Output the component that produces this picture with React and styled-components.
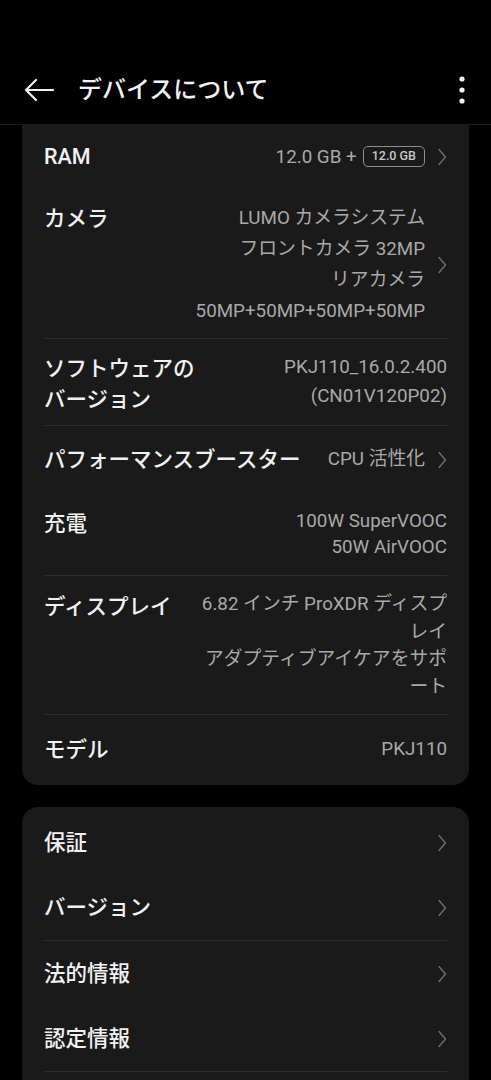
import React from "react";
import styled, { createGlobalStyle } from "styled-components";

const GlobalStyle = createGlobalStyle`
  html, body {
    margin: 0;
    padding: 0;
    background: #000;
  }
  body {
    font-family: Roboto, "Noto Sans CJK JP", "Noto Sans", sans-serif;
    -webkit-font-smoothing: antialiased;
  }
`;

const Page = styled.div`
  width: 491px;
  min-height: 1080px;
  background: #000;
  overflow: hidden;
`;

const Header = styled.header`
  height: 125px;
  box-sizing: border-box;
  padding: 60px 24px 0 24px;
  display: flex;
  align-items: center;
  border-bottom: 1px solid #1b1b1b;
`;

const Title = styled.h1`
  flex: 1;
  margin: 0 0 0 24px;
  font-size: 24px;
  font-weight: 500;
  color: #f2f2f2;
  line-height: 1;
  position: relative;
  top: -2px;
`;

const IconBox = styled.div`
  display: flex;
  align-items: center;
  position: relative;
  top: -2px;
`;

const Card = styled.section`
  margin: ${(p) => (p.$top ? "0" : "22px")} 22px 0;
  background: #1a1a1a;
  border-radius: ${(p) => (p.$top ? "0 0 16px 16px" : "16px 16px 0 0")};
  padding: ${(p) => p.$pad || "0"} 22px 0;
  min-height: ${(p) => p.$minH || "auto"};
`;

const Row = styled.div`
  display: flex;
  align-items: ${(p) => (p.$center ? "center" : "flex-start")};
  padding: ${(p) => p.$pt}px 0 ${(p) => p.$pb}px;
  box-sizing: border-box;
`;

const Label = styled.div`
  flex-shrink: 0;
  font-size: 21.5px;
  font-weight: 500;
  line-height: 31px;
  color: #f1f1f1;
  white-space: nowrap;
`;

const ValueArea = styled.div`
  flex: 1;
  display: flex;
  align-items: center;
  justify-content: flex-end;
  gap: 12px;
  margin-left: 24px;
  align-self: stretch;
`;

const ValueText = styled.div`
  text-align: right;
  font-size: 18.8px;
  line-height: ${(p) => p.$lh || 31}px;
  color: #a9a9a9;
  white-space: nowrap;
  align-self: ${(p) => (p.$top ? "flex-start" : "center")};
`;

const InlineValue = styled.div`
  display: flex;
  align-items: center;
  gap: 6px;
  font-size: 18.8px;
  color: #a9a9a9;
  line-height: 30px;
`;

const Badge = styled.span`
  display: inline-flex;
  align-items: center;
  height: 19px;
  padding: 0 8px;
  border: 1.5px solid #8e8e8e;
  border-radius: 5px;
  font-size: 12.5px;
  font-weight: 500;
  color: #c8c8c8;
  line-height: 1;
`;

const Divider = styled.div`
  height: 1px;
  background: #2e2e2e;
`;

const Chevron = () => (
  <svg width="10" height="18" viewBox="0 0 10 18">
    <polyline points="2,1.5 8.5,9 2,16.5" fill="none" stroke="#6e6e6e" strokeWidth="1.4" strokeLinecap="round" strokeLinejoin="round" />
  </svg>
);

const BackArrow = () => (
  <svg width="30" height="24" viewBox="0 0 30 24">
    <path d="M2 12 H29 M2 12 L12 2 M2 12 L12 22" fill="none" stroke="#f2f2f2" strokeWidth="2.2" strokeLinecap="round" strokeLinejoin="round" />
  </svg>
);

const Kebab = () => (
  <svg width="10" height="28" viewBox="0 0 10 28">
    <circle cx="5" cy="3" r="2.6" fill="#f2f2f2" />
    <circle cx="5" cy="14" r="2.6" fill="#f2f2f2" />
    <circle cx="5" cy="25" r="2.6" fill="#f2f2f2" />
  </svg>
);

function InfoRow({ label, lines, lh, chevron, pt, pb, center }) {
  return (
    <Row $pt={pt} $pb={pb} $center={center}>
      <Label>
        {label.map((l) => (
          <div key={l}>{l}</div>
        ))}
      </Label>
      <ValueArea>
        <ValueText $lh={lh} $top={!chevron}>
          {lines.map((l) => (
            <div key={l}>{l}</div>
          ))}
        </ValueText>
        {chevron && <Chevron />}
      </ValueArea>
    </Row>
  );
}

function LinkRow({ label }) {
  return (
    <Row $pt={17} $pb={17} $center>
      <Label>{label}</Label>
      <ValueArea>
        <Chevron />
      </ValueArea>
    </Row>
  );
}

export default function App() {
  return (
    <Page>
      <GlobalStyle />
      <Header>
        <IconBox>
          <BackArrow />
        </IconBox>
        <Title>デバイスについて</Title>
        <IconBox>
          <Kebab />
        </IconBox>
      </Header>

      <Card $top>
        <Row $pt={16} $pb={16} $center>
          <Label>RAM</Label>
          <ValueArea>
            <InlineValue>
              12.0 GB +<Badge>12.0 GB</Badge>
            </InlineValue>
            <Chevron />
          </ValueArea>
        </Row>
        <InfoRow
          label={["カメラ"]}
          lines={["LUMO カメラシステム", "フロントカメラ 32MP", "リアカメラ", "50MP+50MP+50MP+50MP"]}
          lh={31}
          chevron
          pt={15}
          pb={11}
        />
        <Divider />
        <InfoRow
          label={["ソフトウェアの", "バージョン"]}
          lines={["PKJ110_16.0.2.400", "(CN01V120P02)"]}
          lh={29}
          pt={14}
          pb={10}
        />
        <Divider />
        <InfoRow label={["パフォーマンスブースター"]} lines={["CPU 活性化"]} lh={31} chevron pt={18} pb={18} center />
        <InfoRow label={["充電"]} lines={["100W SuperVOOC", "50W AirVOOC"]} lh={26} pt={15} pb={15} />
        <Divider />
        <InfoRow
          label={["ディスプレイ"]}
          lines={["6.82 インチ ProXDR ディスプ", "レイ", "アダプティブアイケアをサポ", "ート"]}
          lh={27.5}
          pt={15}
          pb={13}
        />
        <Divider />
        <InfoRow label={["モデル"]} lines={["PKJ110"]} lh={31} pt={19} pb={20} />
      </Card>

      <Card $pad="3px" $minH="300px">
        <LinkRow label="保証" />
        <LinkRow label="バージョン" />
        <Divider />
        <LinkRow label="法的情報" />
        <LinkRow label="認定情報" />
        <Divider />
      </Card>
    </Page>
  );
}
